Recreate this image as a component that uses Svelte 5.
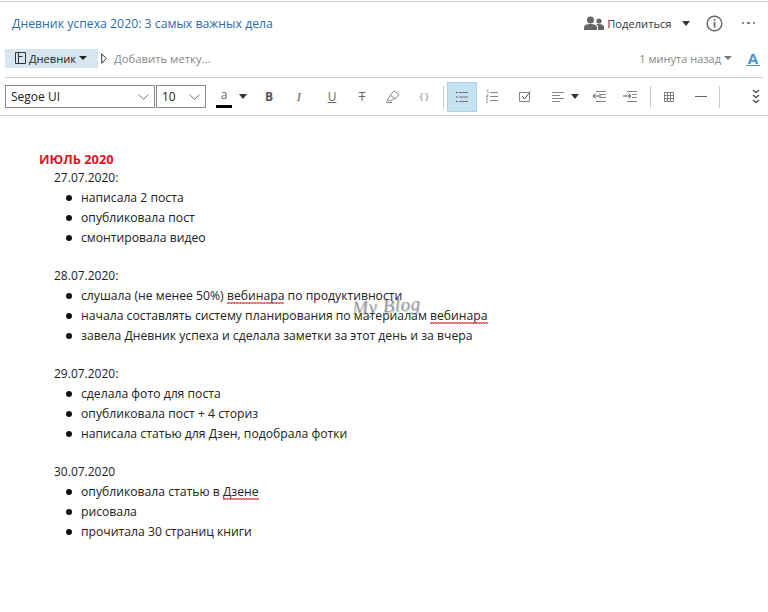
<script>
  const days = [
    { date: '27.07.2020:', items: [['написала 2 поста'], ['опубликовала пост'], ['смонтировала видео']] },
    { date: '28.07.2020:', items: [
      ['слушала (не менее 50%) ', '~вебинара', ' по продуктивности'],
      ['начала составлять систему планирования по материалам ', '~вебинара'],
      ['завела Дневник успеха и сделала заметки за этот день и за вчера'],
    ] },
    { date: '29.07.2020:', items: [['сделала фото для поста'], ['опубликовала пост + 4 сториз'], ['написала статью для Дзен, подобрала фотки']] },
    { date: '30.07.2020', items: [['опубликовала статью в ', '~Дзене'], ['рисовала'], ['прочитала 30 страниц книги']] },
  ]
</script>

<div class="page">
  <header class="title-row">
    <div class="title">Дневник успеха 2020: 3 самых важных дела</div>
    <div class="title-actions">
      <svg class="people" width="20" height="15" viewBox="0 0 20 15"><circle cx="6.500" cy="4" r="3.500"/><path d="M0 14v-2.500C0 9 3 8 6.500 8s6.500 1 6.500 3.500V14z"/><circle cx="15" cy="5" r="2.600"/><path d="M14 14v-3c0-1-.5-2-1.500-2.600.8-.3 1.600-.4 2.500-.4 2.600 0 5 1 5 3.100V14z"/></svg>
      <span class="share">Поделиться</span>
      <span class="caret share-caret"></span>
      <svg class="info" width="17" height="17" viewBox="0 0 17 17"><circle cx="8.500" cy="8.500" r="7.300" fill="none" stroke="#666" stroke-width="1.400"/><rect x="7.700" y="7" width="1.700" height="5.500" fill="#666"/><rect x="7.700" y="4.300" width="1.700" height="1.700" fill="#666"/></svg>
      <span class="dots"><i></i><i></i><i></i></span>
    </div>
  </header>

  <div class="tag-row">
    <div class="notebook">
      <svg width="11" height="12" viewBox="0 0 11 12" fill="none" stroke="#333"><path d="M.5.500h10v11H.5zM3.500.500v11M3.500 4.500h4"/></svg>
      <span>Дневник</span>
      <span class="caret small"></span>
    </div>
    <svg class="tag-arrow" width="6" height="11" viewBox="0 0 6 11"><path d="M.7.800 5.300 5.500.7 10.200z" fill="#fff" stroke="#333"/></svg>
    <span class="add-tag">Добавить метку...</span>
    <span class="saved">1 минута назад</span>
    <span class="caret tiny"></span>
    <span class="font-a">A</span>
  </div>

  <div class="toolbar">
    <div class="select font-select">
      <span>Segoe UI</span>
      <svg width="11" height="6" viewBox="0 0 11 6"><path d="M.5.500 5.500 5.300 10.500.500" fill="none" stroke="#777"/></svg>
    </div>
    <div class="select size-select">
      <span>10</span>
      <svg width="11" height="6" viewBox="0 0 11 6"><path d="M.5.500 5.500 5.300 10.500.500" fill="none" stroke="#777"/></svg>
    </div>
    <div class="color-btn">
      <span class="color-a">a</span>
      <span class="color-bar"></span>
    </div>
    <span class="caret color-caret"></span>
    <span class="fmt bold">B</span>
    <span class="fmt italic">I</span>
    <span class="fmt under">U</span>
    <span class="fmt strike">T</span>
    <svg class="high" width="14" height="13" viewBox="0 0 14 13" fill="none" stroke="#888"><path d="M1 10.500 5.500 3.500 8 1l5 3.500-2.500 3L4 11z"/><path d="M0 12.500h6"/><path d="M4.500 5.500 9.500 9"/></svg>
    <span class="code">{'{ }'}</span>
    <span class="sep"></span>
    <div class="active">
      <svg width="12" height="12" viewBox="0 0 12 12" fill="none" stroke="#777"><path d="M3 1.500h9M3 6h9M3 10.500h9"/><path d="M0 1.500h1.500M0 6h1.500M0 10.500h1.500" stroke="#444"/></svg>
    </div>
    <svg class="num" width="12" height="13" viewBox="0 0 12 13" fill="none" stroke="#888"><path d="M4 2.500h8M4 6.500h8M4 10.500h8"/><path d="M0 .5h2v3M0 5h2v1.500H0V8h2M0 9.500h2M.5 11h1.500M0 12.500h2" stroke-width=".7"/></svg>
    <svg class="check" width="12" height="11" viewBox="0 0 12 11" fill="none" stroke="#888"><path d="M.5 1.500h10v9H.5z"/><path d="M3 5l2.500 3L11.500 .5" stroke="#555"/></svg>
    <svg class="align" width="12" height="12" viewBox="0 0 12 12" fill="none" stroke="#888"><path d="M0 1.500h12M0 4.500h8M0 7.500h12M0 10.500h8"/></svg>
    <span class="caret align-caret"></span>
    <svg class="outdent" width="14" height="12" viewBox="0 0 14 12" fill="none" stroke="#888"><path d="M4 .5h10M7 3.500h7M7 6.500h7M4 10.500h10"/><path d="M9 5H.8M3.500 2.500 1 5l2.500 2.500" stroke="#555"/></svg>
    <svg class="indent" width="14" height="12" viewBox="0 0 14 12" fill="none" stroke="#888"><path d="M4 .5h10M9 3.500h5M9 6.500h5M4 10.500h10"/><path d="M0 5h8M5.500 2.500 8 5 5.500 7.500" stroke="#555"/></svg>
    <span class="sep sep-b"></span>
    <svg class="table" width="10" height="10" viewBox="0 0 10 10" fill="none" stroke="#666" stroke-width=".8"><path d="M.5.500h9v9h-9zM.5 3.500h9M.5 6.500h9M3.500.500v9M6.500.500v9"/></svg>
    <span class="rule"></span>
    <span class="sep sep-c"></span>
    <svg class="more" width="8" height="15" viewBox="0 0 8 15" fill="none" stroke="#555" stroke-width="1.500"><path d="M1 1 4 3.500 7 1M1 6 4 8.500 7 6M1 11l3 2.500L7 11"/></svg>
  </div>

  <main class="note">
    <h1>ИЮЛЬ 2020</h1>
    {#each days as day}
      <section class="day">
        <div class="date">{day.date}</div>
        <ul>
          {#each day.items as item}
            <li>{#each item as part}{#if part.startsWith('~')}<span class="typo">{part.slice(1)}</span>{:else}{part}{/if}{/each}</li>
          {/each}
        </ul>
      </section>
    {/each}
    <span class="mark">My Blog</span>
  </main>
</div>

<style>
  :global(body) {
    margin: 0;
    background: #fff;
  }
  .page {
    width: 768px;
    height: 612px;
    overflow: hidden;
    font-family: "Open Sans", "Noto Sans", sans-serif;
    font-size: 12px;
    color: #222;
    background: #fff;
  }
  .title-row {
    display: flex;
    align-items: center;
    justify-content: space-between;
    height: 42px;
    margin-top: 1px;
    border-top: 1px solid #ccc;
    padding: 0 12px;
  }
  .title {
    color: #2a6ead;
    font-size: 12.270px;
  }
  .title-actions {
    display: flex;
    align-items: center;
  }
  .people {
    fill: #666;
    margin-right: 3px;
  }
  .share {
    font-size: 11.150px;
    color: #333;
  }
  .caret {
    display: inline-block;
    width: 0;
    height: 0;
    border-left: 4.500px solid transparent;
    border-right: 4.500px solid transparent;
    border-top: 5px solid #333;
  }
  .caret.small {
    border-width: 4px 4px 0;
    border-top-color: #222;
  }
  .share-caret {
    margin-left: 10px;
  }
  .info {
    margin-left: 16px;
  }
  .dots {
    display: flex;
    gap: 3px;
    margin-left: 19px;
    margin-right: 1px;
  }
  .dots i {
    width: 2.500px;
    height: 2.500px;
    border-radius: 50%;
    background: #666;
  }
  .tag-row {
    display: flex;
    align-items: center;
    height: 33px;
    margin: 0 5px;
    border-bottom: 1px solid #ccc;
  }
  .notebook {
    display: flex;
    align-items: center;
    gap: 3px;
    width: 93px;
    height: 19px;
    box-sizing: border-box;
    padding-left: 10px;
    font-size: 11.100px;
    background: #d7e6f0;
    margin-bottom: 5px;
  }
  .tag-arrow {
    margin: 0 7px 5px 3px;
  }
  .add-tag {
    color: #888;
    font-size: 11.300px;
    margin-bottom: 5px;
  }
  .saved {
    margin-left: auto;
    margin-bottom: 5px;
    color: #888;
    font-size: 11px;
  }
  .caret.tiny {
    border-width: 4px 4px 0;
    border-top-color: #777;
    margin: 0 0 5px 3px;
  }
  .font-a {
    margin: 0 3px 5px 14px;
    width: 14px;
    color: #4d93c9;
    font-weight: 700;
    font-size: 15px;
    line-height: 14px;
    border-bottom: 1px solid #4d93c9;
    text-align: center;
  }
  .toolbar {
    display: flex;
    align-items: center;
    height: 37px;
    padding-left: 5px;
    border-bottom: 1px solid #ccc;
  }
  .select {
    display: flex;
    align-items: center;
    justify-content: space-between;
    box-sizing: border-box;
    height: 23px;
    padding: 0 5px;
    border: 1px solid #8a8a8a;
  }
  .font-select {
    width: 150px;
  }
  .size-select {
    width: 50px;
    margin-left: 1px;
  }
  .color-btn {
    position: relative;
    width: 16px;
    margin-left: 10px;
    height: 22px;
    text-align: center;
  }
  .color-a {
    line-height: 18px;
    color: #666;
  }
  .color-bar {
    position: absolute;
    left: 0;
    bottom: 0;
    width: 16px;
    height: 3px;
    background: #000;
  }
  .color-caret {
    margin-left: 7px;
  }
  .fmt {
    width: 12px;
    text-align: center;
    color: #666;
  }
  .bold {
    margin-left: 16px;
    font-weight: 700;
    color: #555;
  }
  .italic {
    margin-left: 18px;
    font-style: italic;
    font-family: "Liberation Serif", serif;
    font-size: 13px;
  }
  .under {
    margin-left: 21px;
    text-decoration: underline;
  }
  .strike {
    margin-left: 18px;
    text-decoration: line-through;
  }
  .high {
    margin-left: 18px;
  }
  .code {
    margin-left: 16px;
    width: 16px;
    text-align: center;
    font-size: 9px;
    color: #777;
    white-space: nowrap;
  }
  .sep {
    width: 1px;
    height: 22px;
    background: #ccc;
    margin-left: 11px;
  }
  .active {
    display: flex;
    align-items: center;
    justify-content: center;
    width: 30px;
    height: 30px;
    margin-left: 3px;
    background: #c5e2f2;
    border: 1px solid #a9d3ea;
    box-sizing: border-box;
  }
  .num {
    margin-left: 9px;
  }
  .check {
    margin-left: 20.500px;
  }
  .align {
    margin-left: 21px;
  }
  .align-caret {
    margin-left: 7px;
  }
  .outdent {
    margin-left: 13.500px;
  }
  .indent {
    margin-left: 17px;
  }
  .sep-b {
    margin-left: 13px;
  }
  .table {
    margin-left: 13px;
  }
  .rule {
    width: 12px;
    height: 1px;
    background: #666;
    margin-left: 21px;
  }
  .sep-c {
    margin-left: 12px;
  }
  .more {
    margin-left: 32px;
  }
  .note {
    position: relative;
    padding: 35px 0 0 39px;
    font-size: 12.200px;
    line-height: 20px;
    color: #222;
  }
  h1 {
    margin: 0;
    font-size: 12.800px;
    line-height: 17px;
    font-weight: 700;
    color: #e8101a;
  }
  .day {
    margin: 0 0 18px 15px;
  }
  .date {
    font-size: 12px;
  }
  ul {
    margin: 0;
    padding-left: 27px;
    list-style: none;
  }
  li::before {
    content: "";
    display: inline-block;
    width: 6px;
    height: 6px;
    margin: 0 9px 1px -15px;
    border-radius: 50%;
    background: #111;
    vertical-align: middle;
  }
  .typo {
    background-image:
      linear-gradient(135deg, transparent 38%, #e4606a 38%, #e4606a 62%, transparent 62%),
      linear-gradient(45deg, transparent 38%, #e4606a 38%, #e4606a 62%, transparent 62%);
    background-size: 3px 2px;
    background-position: 0 100%, 1.500px 100%;
    background-repeat: repeat-x;
  }
  .mark {
    position: absolute;
    left: 352px;
    top: 180px;
    font-family: "Liberation Serif", serif;
    font-style: italic;
    font-size: 19px;
    letter-spacing: 0.5px;
    color: rgba(90, 90, 100, 0.55);
    text-shadow: 1px 1px 0 rgba(120, 120, 130, 0.35);
    transform: rotate(-4deg);
  }
</style>
